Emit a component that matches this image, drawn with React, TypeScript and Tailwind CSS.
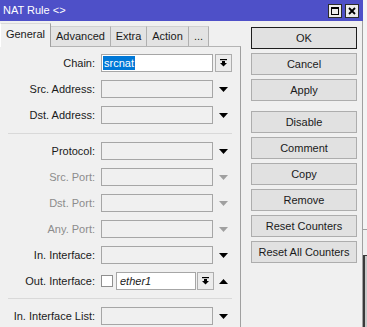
const font = "font-['Liberation_Sans',Arial,sans-serif]"

function Arrow({ up = false, muted = false }: { up?: boolean; muted?: boolean }) {
  const fill = muted ? '#a0a0a0' : '#000000'
  return (
    <svg width="9" height="5" viewBox="0 0 9 5">
      <polygon points={up ? '0,5 9,5 4.5,0' : '0,0 9,0 4.5,5'} fill={fill} />
    </svg>
  )
}

function DropButton({ width = 'w-[17px]' }: { width?: string }) {
  return (
    <div className={`${width} h-[18px] flex items-center justify-center border border-[#adadad] bg-[#ececec]`}>
      <svg width="7" height="8" viewBox="0 0 7 8">
        <rect x="0" y="0" width="7" height="1.2" fill="#000" />
        <rect x="2" y="2" width="3" height="2" fill="#000" />
        <polygon points="0,4 7,4 3.5,7.5" fill="#000" />
      </svg>
    </div>
  )
}

function FieldRow({ label, muted = false, children }: { label: string; muted?: boolean; children: React.ReactNode }) {
  return (
    <div className="flex items-center h-[18px]">
      <div className={`w-[95px] text-right text-[11px] leading-none ${muted ? 'text-[#8c8c8c]' : 'text-[#1a1a1a]'}`}>
        {label}
      </div>
      <div className="ml-[6px] flex items-center">{children}</div>
    </div>
  )
}

function EmptyRow({ label, muted = false, white = false }: { label: string; muted?: boolean; white?: boolean }) {
  return (
    <FieldRow label={label} muted={muted}>
      <div className={`w-[112px] h-[18px] border border-[#a6a6a6] ${white ? 'bg-white' : 'bg-[#f0f0f0]'}`} />
      <div className="w-[19px] flex justify-center ml-[1px]">
        <Arrow muted={muted} />
      </div>
    </FieldRow>
  )
}

const buttons = [
  ['OK', 'Cancel', 'Apply'],
  ['Disable', 'Comment', 'Copy', 'Remove', 'Reset Counters', 'Reset All Counters'],
]

export default function App() {
  return (
    <div className={`w-[367px] h-[327px] flex bg-[#f0f0f0] overflow-hidden ${font}`}>
      <div className="w-[363px] flex flex-col">
        <div className="h-[21px] bg-[#4e50c8] flex items-center pl-[3px] pr-[4px]">
          <span className="text-white text-[11px] leading-none">NAT Rule &lt;&gt;</span>
          <div className="ml-auto flex gap-[3px]">
            <div className="w-[14px] h-[14px] border border-[#2b2b2b] bg-[#ececec] flex items-center justify-center">
              <svg width="8" height="8" viewBox="0 0 8 8">
                <rect x="0.5" y="0.5" width="7" height="7" fill="none" stroke="#000" />
                <rect x="0" y="0" width="8" height="2" fill="#000" />
              </svg>
            </div>
            <div className="w-[14px] h-[14px] border border-[#2b2b2b] bg-[#ececec] flex items-center justify-center">
              <svg width="8" height="8" viewBox="0 0 8 8">
                <path d="M1 1 L7 7 M7 1 L1 7" stroke="#000" strokeWidth="1.8" />
              </svg>
            </div>
          </div>
        </div>

        <div className="flex-1 flex border-r border-[#a0a0a0]">
          <div className="w-[241px] flex flex-col">
            <div className="h-[25px] flex items-end relative z-10">
              <div className="w-[51px] h-[24px] -mb-px bg-[#f0f0f0] border-l border-l-white border-t border-t-[#d8d8d8] border-r border-r-[#a0a0a0] flex items-center justify-center text-[11px] text-[#1a1a1a] pb-[2px]">
                General
              </div>
              {[
                ['Advanced', 'w-[60px]'],
                ['Extra', 'w-[36px]'],
                ['Action', 'w-[42px]'],
                ['...', 'w-[20px]'],
              ].map(([t, w]) => (
                <div
                  key={t}
                  className={`${w} h-[20px] bg-[#e3e3e3] border-t border-t-[#d0d0d0] border-r border-r-[#b0b0b0] flex items-center justify-center text-[11px] text-[#1a1a1a]`}
                >
                  {t}
                </div>
              ))}
            </div>

            <div className="flex-1 border-t border-t-[#b4b4b4] border-r border-r-[#a0a0a0] pt-[7px] flex flex-col gap-2">
              <FieldRow label="Chain:">
                <div className="w-[112px] h-[18px] border border-[#a6a6a6] bg-white flex items-center pl-[1px]">
                  <span className="bg-[#0078d7] text-white text-[11px] leading-[14px] h-[14px] px-[1px]">srcnat</span>
                </div>
                <div className="ml-[2px]">
                  <DropButton />
                </div>
              </FieldRow>
              <EmptyRow label="Src. Address:" />
              <EmptyRow label="Dst. Address:" />
              <div className="h-[2px] mx-[8px] w-[224px] border-b border-[#d9d9d9]" />
              <EmptyRow label="Protocol:" />
              <EmptyRow label="Src. Port:" muted />
              <EmptyRow label="Dst. Port:" muted />
              <EmptyRow label="Any. Port:" muted />
              <EmptyRow label="In. Interface:" />
              <FieldRow label="Out. Interface:">
                <div className="w-[12px] h-[12px] border border-[#8f8f8f] bg-white" />
                <div className="ml-[3px] w-[80px] h-[18px] border border-[#a6a6a6] bg-white flex items-center pl-[3px]">
                  <span className="italic text-[11px] text-[#1a1a1a] leading-none">ether1</span>
                </div>
                <div className="ml-[1px]">
                  <DropButton />
                </div>
                <div className="w-[19px] flex justify-center">
                  <Arrow up />
                </div>
              </FieldRow>
              <div className="h-px mx-[8px] w-[224px] bg-[#d9d9d9]" />
              <EmptyRow label="In. Interface List:" />
            </div>
          </div>

          <div className="flex-1 pt-[6px] pl-[10px] flex flex-col gap-[10px]">
            {buttons.map((group, i) => (
              <div key={i} className="flex flex-col gap-[4px]">
                {group.map((b) => (
                  <div
                    key={b}
                    className={`w-[106px] h-[22px] flex items-center justify-center text-[11px] text-[#1a1a1a] bg-[#e1e1e1] border ${
                      b === 'OK' ? 'border-[#1e1e1e]' : 'border-[#adadad]'
                    }`}
                  >
                    {b}
                  </div>
                ))}
              </div>
            ))}
          </div>
        </div>
      </div>

      <div className="flex-1 flex flex-col">
        <div className="h-[229px] bg-[#f4f4f4]" />
        <div className="h-px bg-[#a0a0a0]" />
        <div className="h-[25px] bg-[#f0f0f0]" />
        <div className="flex-1 border-t border-[#3a3a3a] border-l-2 border-l-[#3a3a3a] bg-[#c8c8c8]" />
      </div>
    </div>
  )
}
